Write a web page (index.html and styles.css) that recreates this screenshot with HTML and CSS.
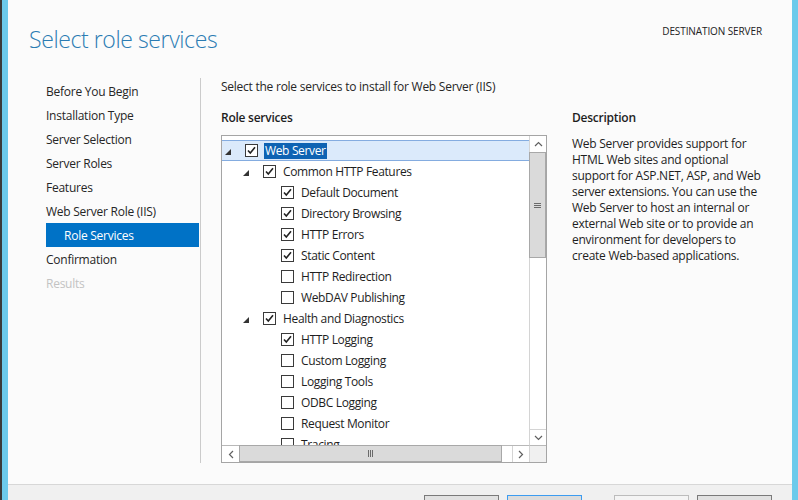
FILE: index.html
```html
<!DOCTYPE html>
<html>
<head>
<meta charset="utf-8">
<title>Select role services</title>
<link rel="stylesheet" href="styles.css">
</head>
<body>
<div class="window">
  <div class="edge-left"></div>
  <div class="main">
    <header class="header">
      <h1 class="title">Select role services</h1>
      <div class="dest">DESTINATION SERVER</div>
    </header>
    <div class="body">
      <nav class="nav">
        <ul>
          <li>Before You Begin</li>
          <li>Installation Type</li>
          <li>Server Selection</li>
          <li>Server Roles</li>
          <li>Features</li>
          <li>Web Server Role (IIS)</li>
          <li class="sub active">Role Services</li>
          <li>Confirmation</li>
          <li class="disabled">Results</li>
        </ul>
      </nav>
      <section class="content">
        <p class="intro">Select the role services to install for Web Server (IIS)</p>
        <div class="columns">
          <div class="services">
            <h2 class="heading">Role services</h2>
            <div class="treebox">
              <div class="tree">
                <div class="row l0 selected">
                  <span class="exp"><svg width="6" height="6" viewBox="0 0 6 6"><polygon points="6,0 6,6 0,6" fill="#333"/></svg></span>
                  <span class="cb"><svg width="11" height="11" viewBox="0 0 11 11"><path d="M2 5.5 L4.3 8 L9 2.3" fill="none" stroke="#222" stroke-width="1.6"/></svg></span>
                  <span class="label hl">Web Server</span>
                </div>
                <div class="row l1">
                  <span class="exp"><svg width="6" height="6" viewBox="0 0 6 6"><polygon points="6,0 6,6 0,6" fill="#333"/></svg></span>
                  <span class="cb"><svg width="11" height="11" viewBox="0 0 11 11"><path d="M2 5.5 L4.3 8 L9 2.3" fill="none" stroke="#222" stroke-width="1.6"/></svg></span>
                  <span class="label">Common HTTP Features</span>
                </div>
                <div class="row l2">
                  <span class="exp"></span>
                  <span class="cb"><svg width="11" height="11" viewBox="0 0 11 11"><path d="M2 5.5 L4.3 8 L9 2.3" fill="none" stroke="#222" stroke-width="1.6"/></svg></span>
                  <span class="label">Default Document</span>
                </div>
                <div class="row l2">
                  <span class="exp"></span>
                  <span class="cb"><svg width="11" height="11" viewBox="0 0 11 11"><path d="M2 5.5 L4.3 8 L9 2.3" fill="none" stroke="#222" stroke-width="1.6"/></svg></span>
                  <span class="label">Directory Browsing</span>
                </div>
                <div class="row l2">
                  <span class="exp"></span>
                  <span class="cb"><svg width="11" height="11" viewBox="0 0 11 11"><path d="M2 5.5 L4.3 8 L9 2.3" fill="none" stroke="#222" stroke-width="1.6"/></svg></span>
                  <span class="label">HTTP Errors</span>
                </div>
                <div class="row l2">
                  <span class="exp"></span>
                  <span class="cb"><svg width="11" height="11" viewBox="0 0 11 11"><path d="M2 5.5 L4.3 8 L9 2.3" fill="none" stroke="#222" stroke-width="1.6"/></svg></span>
                  <span class="label">Static Content</span>
                </div>
                <div class="row l2">
                  <span class="exp"></span>
                  <span class="cb"></span>
                  <span class="label">HTTP Redirection</span>
                </div>
                <div class="row l2">
                  <span class="exp"></span>
                  <span class="cb"></span>
                  <span class="label">WebDAV Publishing</span>
                </div>
                <div class="row l1">
                  <span class="exp"><svg width="6" height="6" viewBox="0 0 6 6"><polygon points="6,0 6,6 0,6" fill="#333"/></svg></span>
                  <span class="cb"><svg width="11" height="11" viewBox="0 0 11 11"><path d="M2 5.5 L4.3 8 L9 2.3" fill="none" stroke="#222" stroke-width="1.6"/></svg></span>
                  <span class="label">Health and Diagnostics</span>
                </div>
                <div class="row l2">
                  <span class="exp"></span>
                  <span class="cb"><svg width="11" height="11" viewBox="0 0 11 11"><path d="M2 5.5 L4.3 8 L9 2.3" fill="none" stroke="#222" stroke-width="1.6"/></svg></span>
                  <span class="label">HTTP Logging</span>
                </div>
                <div class="row l2">
                  <span class="exp"></span>
                  <span class="cb"></span>
                  <span class="label">Custom Logging</span>
                </div>
                <div class="row l2">
                  <span class="exp"></span>
                  <span class="cb"></span>
                  <span class="label">Logging Tools</span>
                </div>
                <div class="row l2">
                  <span class="exp"></span>
                  <span class="cb"></span>
                  <span class="label">ODBC Logging</span>
                </div>
                <div class="row l2">
                  <span class="exp"></span>
                  <span class="cb"></span>
                  <span class="label">Request Monitor</span>
                </div>
                <div class="row l2">
                  <span class="exp"></span>
                  <span class="cb"></span>
                  <span class="label">Tracing</span>
                </div>
              </div>
              <div class="vscroll">
                <div class="sb-btn"><svg width="9" height="6" viewBox="0 0 9 6"><polyline points="1,5 4.5,1.5 8,5" fill="none" stroke="#606060" stroke-width="1.2"/></svg></div>
                <div class="vthumb"><svg width="7" height="7" viewBox="0 0 7 7"><path d="M0 1.5H7M0 3.5H7M0 5.5H7" stroke="#6a6a6a" stroke-width="1"/></svg></div>
                <div class="sb-track"></div>
                <div class="sb-btn down"><svg width="9" height="6" viewBox="0 0 9 6"><polyline points="1,1 4.5,4.5 8,1" fill="none" stroke="#606060" stroke-width="1.2"/></svg></div>
              </div>
              <div class="hscroll">
                <div class="sb-btn h"><svg width="6" height="9" viewBox="0 0 6 9"><polyline points="5,1 1.5,4.5 5,8" fill="none" stroke="#606060" stroke-width="1.2"/></svg></div>
                <div class="hthumb"><svg width="7" height="7" viewBox="0 0 7 7"><path d="M1.5 0V7M3.5 0V7M5.5 0V7" stroke="#6a6a6a" stroke-width="1"/></svg></div>
                <div class="sb-track"></div>
                <div class="sb-btn h right"><svg width="6" height="9" viewBox="0 0 6 9"><polyline points="1,1 4.5,4.5 1,8" fill="none" stroke="#606060" stroke-width="1.2"/></svg></div>
              </div>
              <div class="corner"></div>
            </div>
          </div>
          <div class="desc">
            <h2 class="heading">Description</h2>
            <p class="desc-text">Web Server provides support for<br>HTML Web sites and optional<br>support for ASP.NET, ASP, and Web<br>server extensions. You can use the<br>Web Server to host an internal or<br>external Web site or to provide an<br>environment for developers to<br>create Web-based applications.</p>
          </div>
        </div>
      </section>
    </div>
    <footer class="footer">
      <button class="btn" aria-label="Previous"></button>
      <button class="btn focus" aria-label="Next"></button>
      <button class="btn disabled gap" aria-label="Install"></button>
      <button class="btn" aria-label="Cancel"></button>
    </footer>
  </div>
  <div class="edge-right"></div>
</div>
</body>
</html>
```
FILE: styles.css
```css
* { box-sizing: border-box; margin: 0; padding: 0; }

body {
  width: 798px;
  height: 500px;
  overflow: hidden;
  font-family: "Open Sans", "Noto Sans", sans-serif;
  font-size: 12px;
  letter-spacing: -0.25px;
  color: #262626;
  background: #fbfbfb;
}

.window { display: flex; height: 500px; }

.edge-left {
  width: 8px;
  flex: none;
  border-left: 2px solid #3a3a3a;
  background: #6ccaeb;
}

.edge-right {
  width: 6px;
  flex: none;
  background: #6ccaeb;
}

.main {
  flex: 1;
  display: flex;
  flex-direction: column;
  background: #fbfbfb;
  min-width: 0;
}

.header {
  height: 78px;
  flex: none;
  display: flex;
  justify-content: space-between;
  align-items: flex-start;
  padding: 0 30px 0 21px;
}

.title {
  font-weight: 300;
  font-size: 23px;
  letter-spacing: -0.4px;
  line-height: 32px;
  margin-top: 23px;
  color: #2b7cb3;
}

.dest {
  font-size: 10px;
  letter-spacing: -0.1px;
  line-height: 14px;
  margin-top: 24px;
  color: #222;
}

.body {
  flex: 1;
  display: flex;
  padding-bottom: 21px;
  min-height: 0;
}

.nav {
  width: 193px;
  flex: none;
  border-right: 1px solid #cbcbcb;
  padding: 1px 1px 0 38px;
}

.nav ul { list-style: none; }

.nav li {
  height: 24px;
  line-height: 24px;
  padding-top: 1px;
  white-space: nowrap;
}

.nav li.sub { padding-left: 18px; }
.nav li.active { background: #0072c6; color: #fff; }
.nav li.disabled { color: #c3c3c3; }

.content { padding-left: 20px; flex: 1; }

.intro { line-height: 16px; padding-top: 1px; }

.columns {
  display: flex;
  gap: 25px;
  margin-top: 14px;
}

.heading {
  font-size: 12px;
  font-weight: 600;
  line-height: 16px;
  padding-top: 1px;
  margin-bottom: 9px;
  color: #1e1e1e;
}

.treebox {
  width: 326px;
  height: 328px;
  border: 1px solid #a5a5a5;
  background: #fff;
  display: grid;
  grid-template-columns: 1fr 17px;
  grid-template-rows: 1fr 17px;
}

.tree {
  overflow: hidden;
  padding-top: 4px;
  color: #1e1e1e;
  letter-spacing: -0.35px;
}

.row {
  height: 21px;
  display: flex;
  align-items: center;
  white-space: nowrap;
}

.row.l1 { padding-left: 18px; }
.row.l2 { padding-left: 36px; }

.row.selected {
  background: #dbeafb;
  border-top: 1px solid #84ace0;
  border-bottom: 1px solid #84ace0;
}

.exp {
  width: 23px;
  flex: none;
  padding-left: 3px;
  padding-top: 3px;
  display: flex;
  align-items: center;
}

.cb {
  width: 13px;
  height: 13px;
  flex: none;
  border: 1px solid #3a3a3a;
  background: #fff;
  margin-right: 7px;
  display: flex;
}

.label.hl {
  background: #0e63b3;
  color: #fff;
  padding: 0 1px;
  margin-left: -1px;
  line-height: 16px;
}

.vscroll {
  display: flex;
  flex-direction: column;
  border-left: 1px solid #d4d4d4;
  background: #fff;
}

.sb-btn {
  height: 16px;
  flex: none;
  display: flex;
  align-items: center;
  justify-content: center;
  background: #fff;
}

.sb-btn.down { border-top: 1px solid #d4d4d4; }

.vthumb {
  height: 106px;
  flex: none;
  margin-left: -1px;
  background: #dadada;
  border: 1px solid #a8a8a8;
  display: flex;
  align-items: center;
  justify-content: center;
}

.sb-track { flex: 1; }

.hscroll {
  display: flex;
  border-top: 1px solid #b8b8b8;
  background: #fff;
}

.sb-btn.h { width: 17px; height: auto; }
.sb-btn.right { border-left: 1px solid #d4d4d4; }

.hthumb {
  width: 263px;
  flex: none;
  margin-top: -1px;
  background: #dadada;
  border: 1px solid #a8a8a8;
  display: flex;
  align-items: center;
  justify-content: center;
}

.corner {
  background: #f0f0f0;
  border-top: 1px solid #b8b8b8;
  border-left: 1px solid #d4d4d4;
}

.desc-text {
  line-height: 16px;
  padding-top: 1px;
  white-space: nowrap;
  color: #1e1e1e;
}

.footer {
  height: 16px;
  flex: none;
  border-top: 1px solid #d7d7d7;
  background: #f0f0f0;
  display: flex;
  justify-content: flex-end;
  gap: 8px;
  padding: 10px 20px 0 0;
}

.btn {
  width: 75px;
  height: 23px;
  flex: none;
  font: inherit;
  color: #222;
  background: #e1e1e1;
  border: 1px solid #7a7a7a;
}

.btn.focus { border-color: #3c9cf0; background: #dcdcdc; }
.btn.disabled { border-color: #bcbcbc; background: #f4f4f4; color: #9a9a9a; }
.btn.gap { margin-left: 24px; }
```
